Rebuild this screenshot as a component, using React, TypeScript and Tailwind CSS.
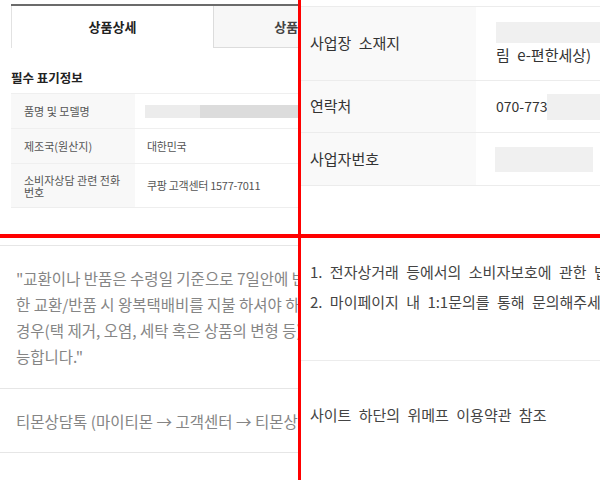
import React from 'react';

const krFont = "font-['Noto_Sans_CJK_KR',sans-serif]";

const infoRows = [
  { label: '품명 및 모델명', value: null, h: 'h-[35px]' },
  { label: '제조국(원산지)', value: '대한민국', h: 'h-[35px]' },
  { label: '소비자상담 관련 전화 번호', value: '쿠팡 고객센터 1577-7011', h: 'h-[44px]' },
];

const ProductInfo: React.FC = () => (
  <div className="h-full overflow-hidden bg-white pl-[11px]">
    <div className="mt-[4px] flex h-[44px] w-[400px] border-t-2 border-[#6b6b6b]">
      <div className="flex w-[202px] shrink-0 items-center justify-center border-l border-[#e2e2e2] bg-white text-[13px] font-bold text-[#222]">
        상품상세
      </div>
      <div className="flex w-[202px] shrink-0 items-center justify-center border-b border-l border-[#dcdcdc] bg-[#f7f7f7] text-[13px] font-bold text-[#444]">
        상품평(2,514)
      </div>
    </div>
    <h3 className="mt-[22px] text-[12.5px] leading-[16px] font-bold text-[#222]">필수 표기정보</h3>
    <div className="mt-[7px] w-[400px] border-b border-[#eeeeee]">
      {infoRows.map(row => (
        <div key={row.label} className={`flex ${row.h} border-t border-[#efefef]`}>
          <div className="flex w-[124px] shrink-0 items-center bg-[#f8f8f8] pr-[10px] pl-[13px] text-[11px] leading-[12px] text-[#555]">
            {row.label}
          </div>
          <div className="flex flex-1 items-center pl-[12px] text-[11px] tracking-[-0.3px] text-[#555]">
            {row.value ?? (
              <div className="-ml-[2px] flex h-[13px] w-[250px]">
                <div className="w-[55px] bg-[#ececec]" />
                <div className="flex-1 bg-[#dcdcdc]" />
              </div>
            )}
          </div>
        </div>
      ))}
    </div>
  </div>
);

const SellerInfo: React.FC = () => (
  <div className="h-full overflow-hidden bg-white pt-[6px] text-[15px] text-[#333] [word-spacing:4px]">
    <div className="w-[340px] border-b border-[#ececec]">
      <div className="flex h-[74px] border-t border-[#ececec]">
        <div className="flex w-[175px] shrink-0 items-center bg-[#f9f9f9] pl-[9px]">사업장 소재지</div>
        <div className="flex flex-1 flex-col justify-center pl-[20px]">
          <div className="h-[21px] w-[140px] shrink-0 bg-[#f0f0f0]" />
          <div className="mt-[1px] leading-[22px] whitespace-nowrap">림 e-편한세상)</div>
        </div>
      </div>
      <div className="flex h-[52px] border-t border-[#ececec]">
        <div className="flex w-[175px] shrink-0 items-center bg-[#f9f9f9] pl-[9px]">연락처</div>
        <div className="flex flex-1 items-center pl-[20px]">
          <span className="text-[14px]">070-773</span>
          <div className="h-[26px] w-[80px] shrink-0 bg-[#f0f0f0]" />
        </div>
      </div>
      <div className="flex h-[53px] border-t border-[#ececec]">
        <div className="flex w-[175px] shrink-0 items-center bg-[#f9f9f9] pl-[9px]">사업자번호</div>
        <div className="flex flex-1 items-center pl-[19px]">
          <div className="h-[25px] w-[98px] shrink-0 bg-[#f0f0f0]" />
        </div>
      </div>
    </div>
  </div>
);

const ReturnPolicy: React.FC = () => (
  <div className="h-full overflow-hidden bg-white pt-[7px] text-[15.5px] text-[#858585]">
    <div className="w-[520px] border-t border-[#e6e6e6] px-[16px] py-[19px] leading-[26px] whitespace-nowrap">
      <p>"교환이나 반품은 수령일 기준으로 7일안에 반품 신청을 해주셔야 합니다. 단순 변심에 의</p>
      <p>한 교환/반품 시 왕복택배비를 지불 하셔야 하며, 상품의 가치가 훼손된</p>
      <p>경우(택 제거, 오염, 세탁 혹은 상품의 변형 등)에는 교환/반품이 불가</p>
      <p>능합니다."</p>
    </div>
    <div className="w-[520px] border-t border-b border-[#e6e6e6] px-[16px] pt-[19px] pb-[18px] leading-[26px] whitespace-nowrap">
      티몬상담톡 (마이티몬 → 고객센터 → 티몬상담톡)
    </div>
  </div>
);

const DisputeInfo: React.FC = () => (
  <div className="h-full overflow-hidden bg-white text-[15px] text-[#444] [word-spacing:4px]">
    <div className="w-[440px] pt-[19px] pb-[43px] pl-[9px] leading-[30px] whitespace-nowrap">
      <p>1. 전자상거래 등에서의 소비자보호에 관한 법률에 따른 처리</p>
      <p>2. 마이페이지 내 1:1문의를 통해 문의해주세요</p>
    </div>
    <div className="w-[440px] border-t border-[#ececec] pt-[43px] pl-[9px] leading-[22px]">
      사이트 하단의 위메프 이용약관 참조
    </div>
  </div>
);

export default function App() {
  return (
    <div className={`grid h-[480px] w-[600px] grid-cols-[298px_3px_299px] grid-rows-[234px_4px_242px] bg-white ${krFont}`}>
      <div className="col-start-1 row-start-1 overflow-hidden">
        <ProductInfo />
      </div>
      <div className="col-start-2 row-span-3 row-start-1 bg-[#ff0000]" />
      <div className="col-start-3 row-start-1 overflow-hidden">
        <SellerInfo />
      </div>
      <div className="col-span-3 col-start-1 row-start-2 bg-[#ff0000]" />
      <div className="col-start-1 row-start-3 overflow-hidden">
        <ReturnPolicy />
      </div>
      <div className="col-start-3 row-start-3 overflow-hidden">
        <DisputeInfo />
      </div>
    </div>
  );
}
